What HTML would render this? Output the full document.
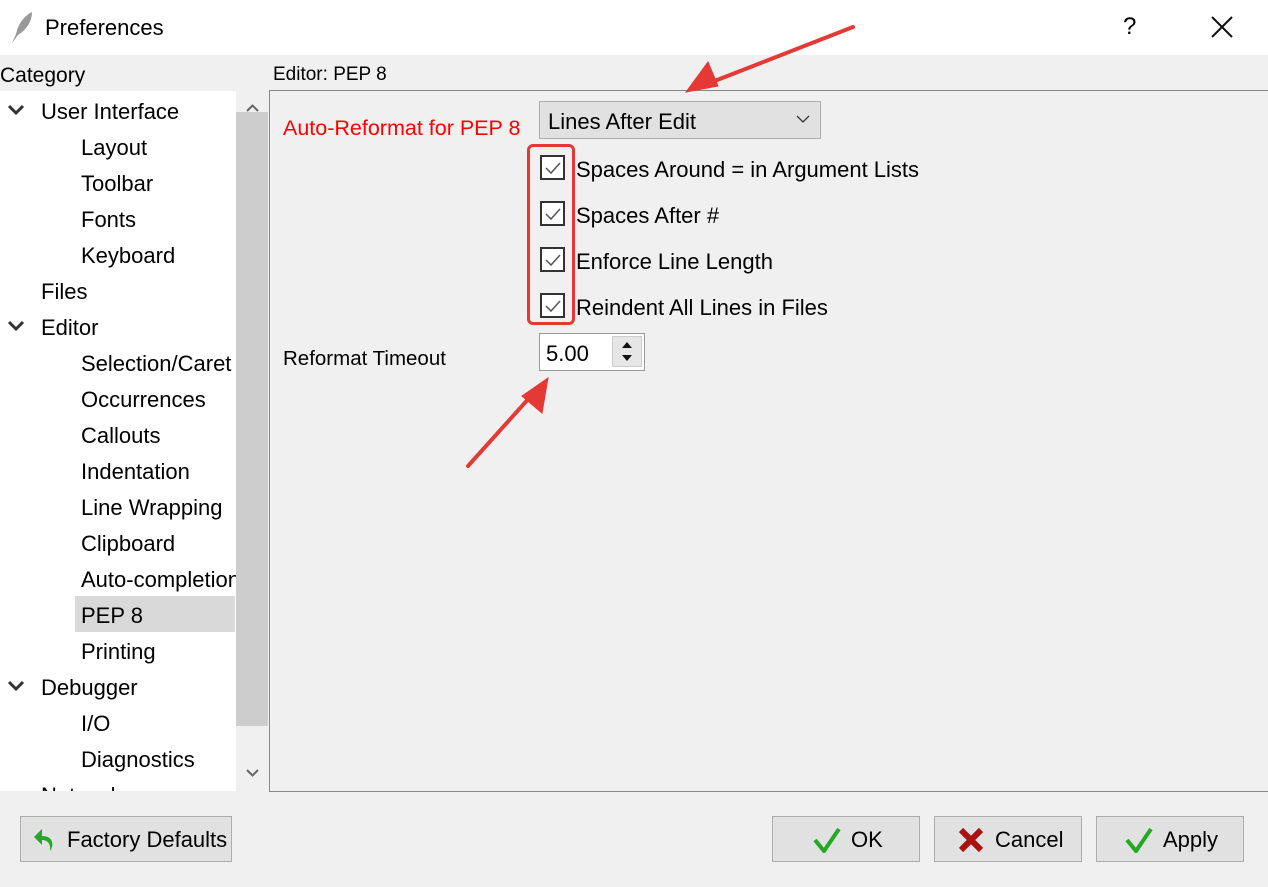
<!DOCTYPE html>
<html><head><meta charset="utf-8"><style>
*{box-sizing:border-box;margin:0;padding:0}
body{width:1268px;height:887px;background:#f0f0f0;font-family:"Liberation Sans",sans-serif;font-size:22px;color:#000;position:relative;overflow:hidden}
.a{position:absolute;white-space:nowrap}
.tb{position:absolute;left:0;top:0;width:1268px;height:55px;background:#fff}
.tree{position:absolute;left:0;top:91px;width:236px;height:700px;background:#fff;overflow:hidden}
.tree div{position:absolute;height:36px;line-height:38px;white-space:nowrap}
.sb{position:absolute;left:236px;top:91px;width:32px;height:700px;background:#f0f0f0}
.panel{position:absolute;left:269px;top:90px;width:1000px;height:702px;border:1px solid #888;border-right:none;background:#f0f0f0}
.btn{position:absolute;top:816px;height:46px;border:1px solid #adadad;background:#e1e1e1;line-height:46px}
.cb{position:absolute;left:540px;width:25px;height:25px;border:2px solid #333;background:#fff}
</style></head><body>
<div class="tb"></div>
<svg class="a" style="left:10px;top:10px" width="26" height="34" viewBox="0 0 26 34"><path d="M22 2 C14 6 8 14 6 24 L2 33 L8 25 C16 20 22 12 22 2Z" fill="#999"/></svg>
<div class="a" style="left:45px;top:15px;font-size:22px">Preferences</div>
<div class="a" style="left:1123px;top:13px;font-size:24px">?</div>
<svg class="a" style="left:1211px;top:16px" width="22" height="22"><path d="M1 1L21 21M21 1L1 21" stroke="#111" stroke-width="2"/></svg>
<div class="a" style="left:0;top:64px;font-size:21px">Category</div>
<div class="a" style="left:273px;top:64px;font-size:19px">Editor: PEP 8</div>
<div class="tree">
<div style="left:75px;top:505px;width:160px;background:#d9d9d9"></div>
<div style="left:41px;top:2px">User Interface</div>
<div style="left:81px;top:38px">Layout</div>
<div style="left:81px;top:74px">Toolbar</div>
<div style="left:81px;top:110px">Fonts</div>
<div style="left:81px;top:146px">Keyboard</div>
<div style="left:41px;top:182px">Files</div>
<div style="left:41px;top:218px">Editor</div>
<div style="left:81px;top:254px">Selection/Caret</div>
<div style="left:81px;top:290px">Occurrences</div>
<div style="left:81px;top:326px">Callouts</div>
<div style="left:81px;top:362px">Indentation</div>
<div style="left:81px;top:398px">Line Wrapping</div>
<div style="left:81px;top:434px">Clipboard</div>
<div style="left:81px;top:470px">Auto-completion</div>
<div style="left:81px;top:506px">PEP 8</div>
<div style="left:81px;top:542px">Printing</div>
<div style="left:41px;top:578px">Debugger</div>
<div style="left:81px;top:614px">I/O</div>
<div style="left:81px;top:650px">Diagnostics</div>
<div style="left:41px;top:686px">Network</div>
</div>
<svg class="a" style="left:7px;top:104px" width="18" height="600"><g fill="none" stroke="#333" stroke-width="3"><path d="M2 2l7 7 7-7"/><path d="M2 218l7 7 7-7"/><path d="M2 578l7 7 7-7"/></g></svg>
<div class="sb"><div style="position:absolute;left:0;top:21px;width:32px;height:614px;background:#cdcdcd"></div>
<svg style="position:absolute;left:10px;top:12px" width="13" height="10"><path d="M1 8l5.5-5.5L12 8" fill="none" stroke="#666" stroke-width="2"/></svg>
<svg style="position:absolute;left:10px;top:677px" width="13" height="10"><path d="M1 2l5.5 5.5L12 2" fill="none" stroke="#666" stroke-width="2"/></svg></div>
<div class="panel"></div>
<div class="a" style="left:283px;top:116px;color:#f00;font-size:21.5px">Auto-Reformat for PEP 8</div>
<div class="a" style="left:539px;top:101px;width:282px;height:38px;border:1px solid #adadad;background:#e1e1e1;line-height:40px;padding-left:8px">Lines After Edit</div>
<svg class="a" style="left:796px;top:115px" width="14" height="9"><path d="M1 1l6 6 6-6" fill="none" stroke="#333" stroke-width="1.3"/></svg>
<div class="cb" style="top:155px"></div><div class="cb" style="top:201px"></div><div class="cb" style="top:247px"></div><div class="cb" style="top:293px"></div>
<svg class="a" style="left:540px;top:155px" width="26" height="170"><g fill="none" stroke="#555" stroke-width="1.5"><path d="M6 13l5 5 9-10"/><path d="M6 59l5 5 9-10"/><path d="M6 105l5 5 9-10"/><path d="M6 151l5 5 9-10"/></g></svg>
<div class="a" style="left:527px;top:144px;width:48px;height:181px;border:3px solid #e53935;border-radius:6px"></div>
<div class="a" style="left:576px;top:157px">Spaces Around = in Argument Lists</div>
<div class="a" style="left:576px;top:203px">Spaces After #</div>
<div class="a" style="left:576px;top:249px">Enforce Line Length</div>
<div class="a" style="left:576px;top:295px">Reindent All Lines in Files</div>
<div class="a" style="left:283px;top:347px;font-size:20.5px">Reformat Timeout</div>
<div class="a" style="left:539px;top:333px;width:106px;height:38px;border:1px solid #999;background:#fff;padding-left:6px;line-height:40px">5.00</div>
<div class="a" style="left:612px;top:336px;width:30px;height:31px;background:#e6e6e6;border:1px solid #ccc"></div>
<svg class="a" style="left:619px;top:339px" width="16" height="26"><path d="M3 9l5-6 5 6z M3 16l5 6 5-6z" fill="#111"/></svg>
<svg class="a" style="left:0;top:0" width="1268" height="887"><g stroke="#e53935" stroke-width="4" fill="#e53935" stroke-linecap="round"><path d="M853 27L712 82"/><path d="M686 92l22-30 10 24z" stroke-width="1"/><path d="M468 466L531 396"/><path d="M548 378l-6 35-20-17z" stroke-width="1"/></g></svg>
<div class="btn" style="left:20px;width:212px"><svg style="position:absolute;left:12px;top:10px" width="22" height="26"><path d="M9 2L1 10l8 8v-5c5 0 9 3 8 11 4-5 4-15-8-15z" fill="#2aa52a"/></svg><span style="position:absolute;left:46px">Factory Defaults</span></div>
<div class="btn" style="left:772px;width:148px"><svg style="position:absolute;left:40px;top:10px" width="28" height="26"><path d="M2 13l9 11L26 2" fill="none" stroke="#22aa22" stroke-width="4"/></svg><span style="position:absolute;left:78px">OK</span></div>
<div class="btn" style="left:934px;width:148px"><svg style="position:absolute;left:23px;top:10px" width="26" height="26"><path d="M3 3l20 20M23 3L3 23" stroke="#aa1111" stroke-width="6"/></svg><span style="position:absolute;left:60px">Cancel</span></div>
<div class="btn" style="left:1096px;width:148px"><svg style="position:absolute;left:28px;top:10px" width="28" height="26"><path d="M2 13l9 11L26 2" fill="none" stroke="#22aa22" stroke-width="4"/></svg><span style="position:absolute;left:66px">Apply</span></div>
</body></html>
